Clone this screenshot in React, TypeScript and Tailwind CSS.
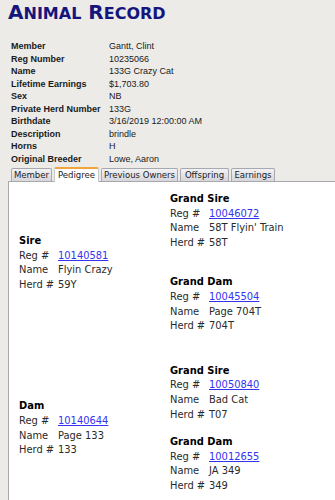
import React from "react";

type Animal = { heading: string; reg: string; name: string; herd: string };

const details: [string, string][] = [
  ["Member", "Gantt, Clint"],
  ["Reg Number", "10235066"],
  ["Name", "133G Crazy Cat"],
  ["Lifetime Earnings", "$1,703.80"],
  ["Sex", "NB"],
  ["Private Herd Number", "133G"],
  ["Birthdate", "3/16/2019 12:00:00 AM"],
  ["Description", "brindle"],
  ["Horns", "H"],
  ["Original Breeder", "Lowe, Aaron"],
];

const tabs = [
  { label: "Member", w: "w-[41px]" },
  { label: "Pedigree", w: "w-[45px]" },
  { label: "Previous Owners", w: "w-[77px]" },
  { label: "Offspring", w: "w-[49px]" },
  { label: "Earnings", w: "w-[44px]" },
];

function AnimalBlock({ a, className = "" }: { a: Animal; className?: string }) {
  return (
    <div className={`leading-[14.6px] ${className}`}>
      <p className="font-bold text-black">{a.heading}</p>
      <div className="flex">
        <span className="w-[39px] shrink-0">Reg #</span>
        <a href="#" className="text-[#3434f0] underline">
          {a.reg}
        </a>
      </div>
      <div className="flex">
        <span className="w-[39px] shrink-0">Name</span>
        <span>{a.name}</span>
      </div>
      <div className="flex">
        <span className="w-[39px] shrink-0">Herd #</span>
        <span>{a.herd}</span>
      </div>
    </div>
  );
}

export default function App() {
  return (
    <div className="min-h-[500px] w-[335px] overflow-hidden bg-[#ecebe8] font-['Liberation_Sans',Arial,sans-serif]">
      {/* Title */}
      <h1 className="pl-[8px] font-['DejaVu_Sans',sans-serif] text-[20px] font-bold leading-[24px] text-[#15157c]">
        A<span className="text-[16px]">NIMAL</span> R<span className="text-[16px]">ECORD</span>
      </h1>

      {/* Details */}
      <div className="mt-[14px] pl-[11px] text-[9px] leading-[12.5px] text-[#1a1a1a]">
        {details.map(([label, value]) => (
          <div key={label} className="flex">
            <span className="w-[98px] shrink-0 font-bold">{label}</span>
            <span>{value}</span>
          </div>
        ))}
      </div>

      {/* Tabs */}
      <div className="mt-[2px] flex items-end gap-[2px] pl-[11px] font-['DejaVu_Sans_Condensed','DejaVu_Sans',sans-serif] text-[9.5px] [font-stretch:condensed]">
        {tabs.map((t) =>
          t.label === "Pedigree" ? (
            <div
              key={t.label}
              className={`${t.w} relative z-10 -mb-px flex h-[15px] items-center justify-center rounded-t-[2px] border-x border-t-2 border-x-[#c8c8cc] border-t-[#f2a43a] bg-white text-[#222]`}
            >
              {t.label}
            </div>
          ) : (
            <div
              key={t.label}
              className={`${t.w} flex h-[13px] items-center justify-center rounded-t-[2px] border-x border-t border-[#a8a8b0] bg-gradient-to-b from-[#f2f2f4] to-[#d6d6dc] text-[#222]`}
            >
              {t.label}
            </div>
          )
        )}
      </div>

      {/* Pedigree panel */}
      <div className="ml-[8px] flex min-h-[321px] border-l border-t border-[#a8a8ac] bg-white pl-[10px] font-['DejaVu_Sans_Condensed','DejaVu_Sans',sans-serif] text-[11px] text-[#2a2a2a] [font-stretch:condensed]">
        <div className="w-[151px] shrink-0">
          <AnimalBlock className="mt-[52px]" a={{ heading: "Sire", reg: "10140581", name: "Flyin Crazy", herd: "59Y" }} />
          <AnimalBlock className="mt-[107px]" a={{ heading: "Dam", reg: "10140644", name: "Page 133", herd: "133" }} />
        </div>
        <div className="flex-1">
          <AnimalBlock className="mt-[10px]" a={{ heading: "Grand Sire", reg: "10046072", name: "58T Flyin' Train", herd: "58T" }} />
          <AnimalBlock className="mt-[25px]" a={{ heading: "Grand Dam", reg: "10045504", name: "Page 704T", herd: "704T" }} />
          <AnimalBlock className="mt-[30px]" a={{ heading: "Grand Sire", reg: "10050840", name: "Bad Cat", herd: "T07" }} />
          <AnimalBlock className="mt-[13px]" a={{ heading: "Grand Dam", reg: "10012655", name: "JA 349", herd: "349" }} />
        </div>
      </div>
    </div>
  );
}
